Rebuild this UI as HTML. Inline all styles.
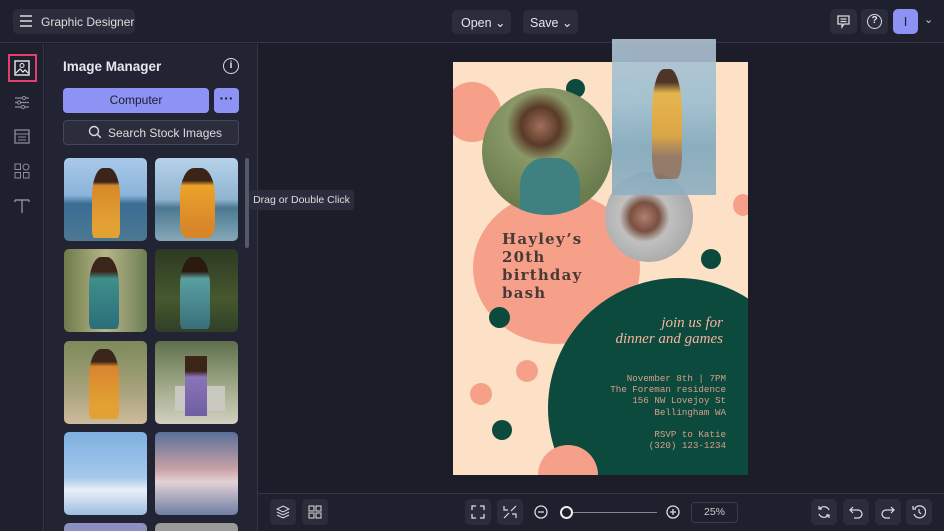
<!DOCTYPE html><html><head><style>
*{box-sizing:border-box;margin:0;padding:0}
body{width:944px;height:531px;overflow:hidden;background:#1c1d29;font-family:"Liberation Sans",sans-serif;color:#e6e6ee;position:relative}
.a{position:absolute}
.btn{position:absolute;background:#2c2d3c;border-radius:5px}
.c{position:absolute;border-radius:50%}
svg{position:absolute}
</style></head><body>
<!-- top bar -->
<div class="a" style="left:0;top:0;width:944px;height:43px;background:#1f202d;border-bottom:1px solid #34354a"></div>
<div class="btn" style="left:13px;top:9px;width:122px;height:25px"></div>
<svg style="left:19px;top:15px" width="14" height="12"><path d="M1 1h12M1 6h12M1 11h12" stroke="#ddd" stroke-width="1.5"/></svg>
<div class="a" style="left:41px;top:15px;font-size:12px;color:#ddd">Graphic Designer</div>
<div class="btn" style="left:452px;top:10px;width:59px;height:24px"></div>
<div class="a" style="left:461px;top:15px;font-size:12.5px">Open ⌄</div>
<div class="btn" style="left:523px;top:10px;width:55px;height:24px"></div>
<div class="a" style="left:530px;top:15px;font-size:12.5px">Save ⌄</div>
<div class="btn" style="left:830px;top:9px;width:27px;height:25px"></div>
<svg style="left:836px;top:14px" width="15" height="15"><path d="M2 2h11v8H8l-2 3v-3H2z M4.5 5h6M4.5 7.5h6" stroke="#ddd" fill="none" stroke-width="1.3"/></svg>
<div class="btn" style="left:861px;top:9px;width:27px;height:25px"></div>
<div class="a" style="left:867px;top:14px;width:15px;height:15px;border:1.5px solid #ddd;border-radius:50%;font-size:10px;text-align:center;line-height:12px;font-weight:bold">?</div>
<div class="a" style="left:893px;top:9px;width:25px;height:25px;background:#8c93f5;border-radius:5px;text-align:center;line-height:25px;font-size:13px;color:#1c1d29">I</div>
<div class="a" style="left:924px;top:13px;font-size:11px;color:#ccc">⌄</div>
<!-- left rail -->
<div class="a" style="left:0;top:44px;width:44px;height:487px;background:#1f202d;border-right:1px solid #34354a"></div>
<div class="a" style="left:8px;top:54px;width:29px;height:28px;border:2px solid #e23f6c"></div>
<svg style="left:14px;top:60px" width="16" height="16"><rect x="1" y="1" width="14" height="14" fill="none" stroke="#eee" stroke-width="1.4"/><path d="M2 13l4-4 3 3 2-2 3 3" stroke="#eee" fill="none" stroke-width="1.2"/><circle cx="8" cy="5.5" r="2" fill="none" stroke="#eee"/></svg>
<svg style="left:14px;top:95px" width="16" height="15"><path d="M1 3h14M1 7.5h14M1 12h14" stroke="#8a8ca0" stroke-width="1.2"/><circle cx="10" cy="3" r="1.6" fill="#1f202d" stroke="#8a8ca0"/><circle cx="5" cy="7.5" r="1.6" fill="#1f202d" stroke="#8a8ca0"/><circle cx="9" cy="12" r="1.6" fill="#1f202d" stroke="#8a8ca0"/></svg>
<svg style="left:14px;top:129px" width="16" height="15"><rect x="1" y="1" width="14" height="13" fill="none" stroke="#8a8ca0" stroke-width="1.3"/><path d="M1 5h14M4 8h8M4 11h8" stroke="#8a8ca0"/></svg>
<svg style="left:14px;top:163px" width="16" height="16"><rect x="1" y="1" width="5.5" height="5.5" fill="none" stroke="#8a8ca0"/><circle cx="12" cy="4" r="3" fill="none" stroke="#8a8ca0"/><rect x="1" y="9.5" width="5.5" height="5.5" fill="none" stroke="#8a8ca0"/><rect x="9.5" y="9.5" width="5.5" height="5.5" fill="none" stroke="#8a8ca0"/></svg>
<svg style="left:14px;top:198px" width="16" height="16"><path d="M1 2h14M8 2v13M1 2v2M15 2v2" stroke="#8a8ca0" stroke-width="1.4" fill="none"/></svg>
<!-- panel -->
<div class="a" style="left:45px;top:44px;width:213px;height:487px;background:#232433;border-right:1px solid #34354a"></div>
<div class="a" style="left:63px;top:59px;font-size:13.5px;font-weight:bold">Image Manager</div>
<div class="a" style="left:223px;top:58px;width:16px;height:16px;border:1.4px solid #ddd;border-radius:50%;font-size:10px;text-align:center;line-height:13px;font-weight:bold">i</div>
<div class="a" style="left:63px;top:88px;width:146px;height:25px;background:#8c93f5;border-radius:4px;text-align:center;line-height:25px;font-size:12px;color:#1c1d29">Computer</div>
<div class="a" style="left:214px;top:88px;width:25px;height:25px;background:#8c93f5;border-radius:4px;text-align:center;line-height:20px;font-size:14px;color:#1c1d29;font-weight:bold">···</div>
<div class="a" style="left:63px;top:120px;width:176px;height:25px;background:#2c2d3c;border:1px solid #44465a;border-radius:4px"></div>
<svg style="left:88px;top:125px" width="14" height="14"><circle cx="6" cy="6" r="4.5" stroke="#ddd" fill="none" stroke-width="1.4"/><path d="M9.3 9.3l3.5 3.5" stroke="#ddd" stroke-width="1.4"/></svg>
<div class="a" style="left:108px;top:126px;font-size:12px;color:#ddd">Search Stock Images</div>
<div class="a" style="left:64px;top:158px;width:83px;height:83px;border-radius:5px;background:linear-gradient(#a9c9ea 0,#8ab4d9 45%,#3b6d93 55%,#4d7893 100%)"><div class="a" style="left:28px;top:10px;width:28px;height:70px;background:linear-gradient(#3b2418 20%,#d6882a 25%,#e3a133 80%);border-radius:40% 40% 10% 10%"></div></div>
<div class="a" style="left:155px;top:158px;width:83px;height:83px;border-radius:5px;background:linear-gradient(#b7d2ea 0,#8fb3cf 50%,#4b7891 60%,#87a8b8 100%)"><div class="a" style="left:25px;top:10px;width:35px;height:70px;background:linear-gradient(#3b2418 18%,#eba32a 25%,#d8862a 85%);border-radius:40% 40% 20% 20%"></div></div>
<div class="a" style="left:64px;top:249px;width:83px;height:83px;border-radius:5px;background:linear-gradient(90deg,#6d7b4a,#b7b589 50%,#6e7f54)"><div class="a" style="left:25px;top:8px;width:30px;height:72px;background:linear-gradient(#3b2418 20%,#3f8f8a 30%,#2b6d7a);border-radius:40% 40% 10% 10%"></div></div>
<div class="a" style="left:155px;top:249px;width:83px;height:83px;border-radius:5px;background:linear-gradient(#2c3a22,#46582f 60%,#304027)"><div class="a" style="left:25px;top:8px;width:30px;height:72px;background:linear-gradient(#2a1a10 20%,#5aa0a0 30%,#386f7a);border-radius:40% 40% 10% 10%"></div></div>
<div class="a" style="left:64px;top:341px;width:83px;height:83px;border-radius:5px;background:linear-gradient(#7c8a5a,#a8a27c 60%,#cdbb9c)"><div class="a" style="left:25px;top:8px;width:30px;height:70px;background:linear-gradient(#3b2418 18%,#d88530 25%,#e3a133 80%);border-radius:40% 40% 10% 10%"></div></div>
<div class="a" style="left:155px;top:341px;width:83px;height:83px;border-radius:5px;background:linear-gradient(#5f6f4d,#9aa583 50%,#d3d0c0)"><div class="a" style="left:20px;top:45px;width:50px;height:25px;background:#c9c8c0"></div><div class="a" style="left:30px;top:15px;width:22px;height:60px;background:linear-gradient(#3b2418 25%,#8a74b8 35%,#6f5fa0)"></div></div>
<div class="a" style="left:64px;top:432px;width:83px;height:83px;border-radius:5px;background:linear-gradient(#7fb0e0,#a6c8ec 55%,#e8f0f8 70%,#9dbde0)"></div>
<div class="a" style="left:155px;top:432px;width:83px;height:83px;border-radius:5px;background:linear-gradient(#5a6f9a,#c9a2a5 45%,#e3d1d6 60%,#6e7fa3)"></div>
<div class="a" style="left:64px;top:523px;width:83px;height:8px;background:#8c8fc0;border-radius:5px 5px 0 0"></div>
<div class="a" style="left:155px;top:523px;width:83px;height:8px;background:#9a9a9a;border-radius:5px 5px 0 0"></div>
<div class="a" style="left:245px;top:158px;width:4px;height:90px;background:#55576a;border-radius:2px"></div>
<div class="a" style="left:249px;top:190px;width:105px;height:20px;background:#2c2d3c;border-radius:3px;font-size:10.5px;line-height:20px;text-align:center;color:#ddd">Drag or Double Click</div>
<!-- poster -->
<div class="a" style="left:453px;top:62px;width:295px;height:413px;background:#fde1c6;overflow:hidden">
 <div class="c" style="left:-10px;top:20px;width:58px;height:60px;background:#f6a08a"></div>
 <div class="c" style="left:20px;top:130px;width:167px;height:152px;background:#f6a08a"></div>
 <div class="c" style="left:95px;top:216px;width:260px;height:260px;background:#0b4a3c"></div>
 <div class="c" style="left:113px;top:17px;width:19px;height:19px;background:#0b4a3c"></div>
 <div class="c" style="left:29px;top:26px;width:130px;height:127px;background:radial-gradient(circle at 45% 30%,#a0705a 0,#5a3a28 17%,#8a9868 30%,#6b7d4f 70%);overflow:hidden"><div class="a" style="left:38px;top:70px;width:60px;height:70px;background:#3f8080;border-radius:40% 40% 0 0"></div></div>
 <div class="c" style="left:280px;top:132px;width:20px;height:22px;background:#f6a08a"></div>
 <div class="c" style="left:152px;top:110px;width:88px;height:90px;background:radial-gradient(circle at 45% 50%,#b08070 0,#7a5040 22%,#c0c0c0 38%,#999)"></div>
 <div class="c" style="left:248px;top:187px;width:20px;height:20px;background:#0b4a3c"></div>
 <div class="c" style="left:36px;top:245px;width:21px;height:21px;background:#0b4a3c"></div>
 <div class="c" style="left:63px;top:298px;width:22px;height:22px;background:#f6a08a"></div>
 <div class="c" style="left:17px;top:321px;width:22px;height:22px;background:#f6a08a"></div>
 <div class="c" style="left:39px;top:358px;width:20px;height:20px;background:#0b4a3c"></div>
 <div class="c" style="left:85px;top:383px;width:60px;height:60px;background:#f6a08a"></div>
 <div class="a" style="left:49px;top:168px;font-family:'DejaVu Serif',serif;font-weight:bold;font-size:15px;line-height:18px;color:#4a3a36;letter-spacing:1.2px">Hayley’s<br>20th<br>birthday<br>bash</div>
 <div class="a" style="left:120px;top:253px;width:150px;text-align:right;font-family:'Liberation Serif',serif;font-style:italic;font-size:15px;line-height:16px;color:#f6b3a0">join us for<br>dinner and games</div>
 <div class="a" style="left:120px;top:311px;width:153px;text-align:right;font-family:'Liberation Mono',monospace;font-size:9.2px;line-height:11.2px;color:#d99e8c">November 8th | 7PM<br>The Foreman residence<br>156 NW Lovejoy St<br>Bellingham WA<br><br>RSVP to Katie<br>(320) 123-1234</div>
</div>
<div class="a" style="left:612px;top:39px;width:104px;height:156px;background:linear-gradient(#b0c2d2 0,#9bbfd2 40%,#7fa8bd 70%,#8fb0c2);opacity:0.9"><div class="a" style="left:40px;top:30px;width:30px;height:110px;background:linear-gradient(#3b2418 12%,#e2b040 22%,#d9a23a 60%,#8a7060 80%);border-radius:40% 40% 20% 20%"></div></div>
<!-- bottom bar -->
<div class="a" style="left:258px;top:493px;width:686px;height:38px;background:#1f202d;border-top:1px solid #34354a"></div>
<div class="btn" style="left:270px;top:499px;width:26px;height:26px"></div>
<svg style="left:276px;top:505px" width="14" height="14"><path d="M7 1l6 3-6 3-6-3zM1 7l6 3 6-3M1 10l6 3 6-3" stroke="#ddd" fill="none"/></svg>
<div class="btn" style="left:302px;top:499px;width:26px;height:26px"></div>
<svg style="left:308px;top:505px" width="14" height="14"><rect x="1" y="1" width="5" height="5" fill="none" stroke="#ddd"/><rect x="8" y="1" width="5" height="5" fill="none" stroke="#ddd"/><rect x="1" y="8" width="5" height="5" fill="none" stroke="#ddd"/><rect x="8" y="8" width="5" height="5" fill="none" stroke="#ddd"/></svg>
<div class="btn" style="left:465px;top:499px;width:26px;height:26px"></div>
<svg style="left:471px;top:505px" width="14" height="14"><path d="M1 5V1h4M9 1h4v4M13 9v4H9M5 13H1V9" stroke="#ddd" fill="none" stroke-width="1.3"/></svg>
<div class="btn" style="left:497px;top:499px;width:26px;height:26px"></div>
<svg style="left:503px;top:505px" width="14" height="14"><path d="M1 1v4h4M13 13V9H9M8 6l5-5M6 8l-5 5" stroke="#ddd" fill="none" stroke-width="1.2"/></svg>
<svg style="left:534px;top:505px" width="14" height="14"><circle cx="7" cy="7" r="6" stroke="#ddd" fill="none" stroke-width="1.3"/><path d="M4 7h6" stroke="#ddd" stroke-width="1.3"/></svg>
<div class="a" style="left:560px;top:512px;width:97px;height:1px;background:#888"></div>
<div class="c" style="left:560px;top:506px;width:13px;height:13px;border:2px solid #eee;background:#1f202d"></div>
<svg style="left:666px;top:505px" width="14" height="14"><circle cx="7" cy="7" r="6" stroke="#ddd" fill="none" stroke-width="1.3"/><path d="M4 7h6M7 4v6" stroke="#ddd" stroke-width="1.3"/></svg>
<div class="a" style="left:691px;top:502px;width:47px;height:21px;border:1px solid #3a3b4e;border-radius:4px;text-align:center;line-height:19px;font-size:10.5px;color:#ccc">25%</div>
<div class="btn" style="left:811px;top:499px;width:26px;height:26px"></div>
<svg style="left:817px;top:505px" width="14" height="14"><path d="M12 5A5.5 5.5 0 0 0 2.5 4M2 9a5.5 5.5 0 0 0 9.5 1M2 1v3h3M12 13v-3H9" stroke="#ddd" fill="none" stroke-width="1.2"/></svg>
<div class="btn" style="left:843px;top:499px;width:26px;height:26px"></div>
<svg style="left:849px;top:505px" width="14" height="14"><path d="M4 2L1 5l3 3M1 5h8a4 4 0 0 1 0 8H5" stroke="#ddd" fill="none" stroke-width="1.2"/></svg>
<div class="btn" style="left:875px;top:499px;width:26px;height:26px"></div>
<svg style="left:881px;top:505px" width="14" height="14"><path d="M10 2l3 3-3 3M13 5H5a4 4 0 0 0 0 8h4" stroke="#ddd" fill="none" stroke-width="1.2"/></svg>
<div class="btn" style="left:906px;top:499px;width:26px;height:26px"></div>
<svg style="left:912px;top:505px" width="14" height="14"><path d="M3 3a6 6 0 1 1-1 6M1 1v3h3M7 4v3l2 2" stroke="#ddd" fill="none" stroke-width="1.2"/></svg>
</body></html>
